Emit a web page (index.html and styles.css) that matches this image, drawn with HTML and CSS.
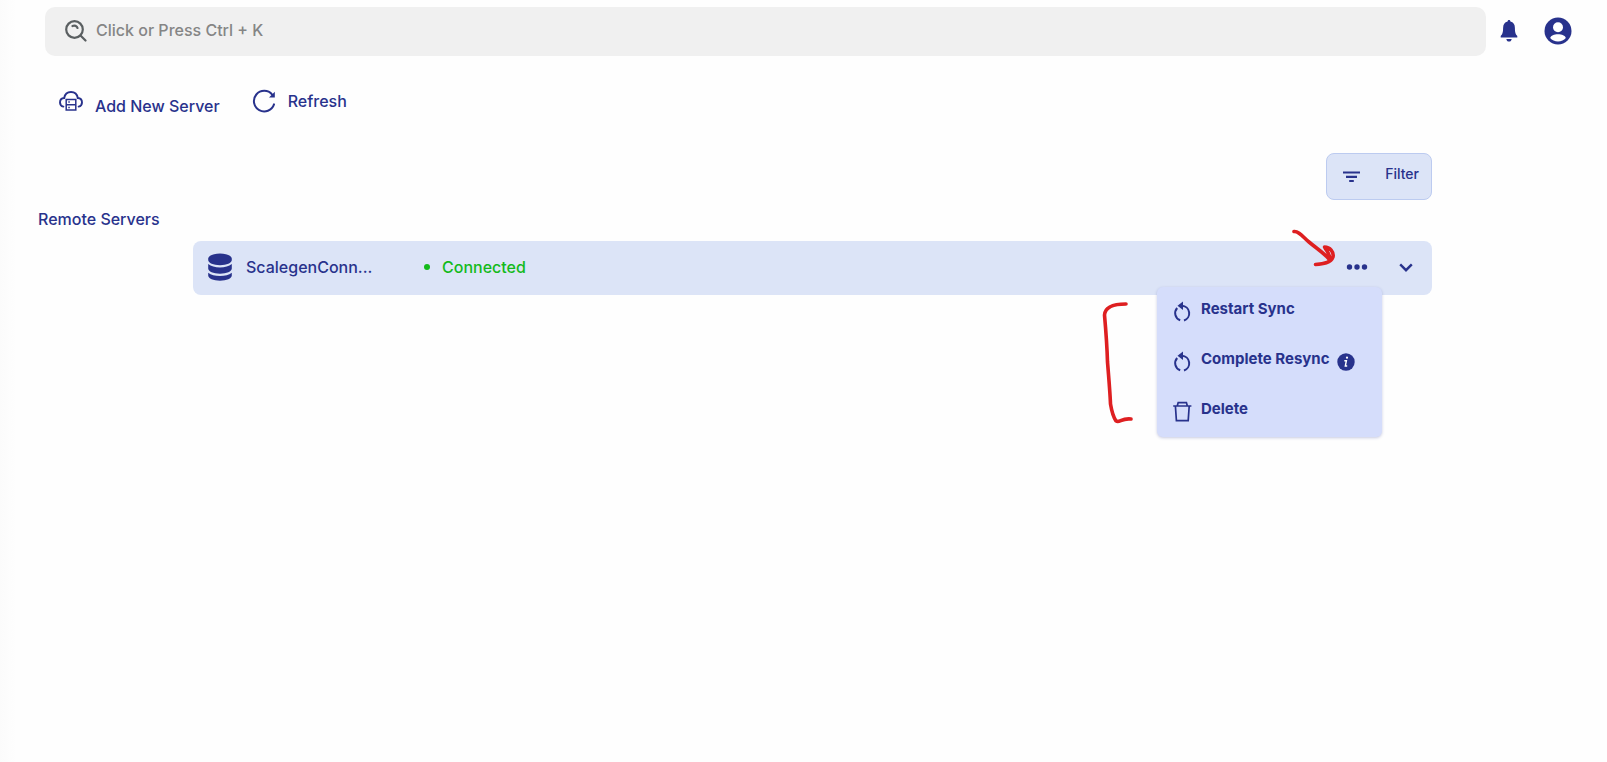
FILE: index.html
```html
<!DOCTYPE html>
<html lang="en">
<head>
    <meta charset="UTF-8">
    <meta name="viewport" content="width=device-width, initial-scale=1.0">
    <title>Remote Servers</title>
    <link rel="stylesheet" href="styles.css">
</head>
<body>
    <header class="topbar">
        <label class="search">
            <svg width="22" height="22" viewBox="0 0 22 22" fill="none" stroke="#5a5f61" stroke-width="2.2" stroke-linecap="round">
                <circle cx="9.5" cy="9.5" r="8.3"/>
                <path d="M15.5 15.5L20.5 20.5M7.5 6C9.5 5 12 6 12.5 8"/>
            </svg>
            <input type="text" aria-label="Search" placeholder="Click or Press Ctrl + K">
        </label>
        <button class="icon-btn bell" aria-label="Notifications">
            <svg width="18" height="22" viewBox="0 0 18 22" fill="#28328c">
                <path d="M9 0C9.9 0 10.4 .7 10.4 1.6C13.4 2.3 14.9 4.7 14.9 8C14.9 12.6 15.6 14.3 17.3 16V17.5H.7V16C2.4 14.3 3.1 12.6 3.1 8C3.1 4.7 4.6 2.3 7.6 1.6C7.6 .7 8.1 0 9 0Z"/>
                <path d="M6.3 19H11.7C11.5 20.7 10.4 21.6 9 21.6C7.6 21.6 6.5 20.7 6.3 19Z"/>
            </svg>
        </button>
        <button class="icon-btn" aria-label="Account">
            <svg width="28" height="28" viewBox="0 0 28 28">
                <circle cx="14" cy="14" r="13.5" fill="#28328c"/>
                <circle cx="14" cy="10.3" r="5" fill="#fff"/>
                <path d="M6.2 21C7 18.3 10 17.2 14 17.2C18 17.2 21 18.3 21.8 21C20 23.3 17.2 24.5 14 24.5C10.8 24.5 8 23.3 6.2 21Z" fill="#fff"/>
            </svg>
        </button>
    </header>

    <main>
        <div class="toolbar">
            <button class="tool add">
                <svg width="24" height="24" viewBox="0 0 24 24" fill="none" stroke="#28328c" stroke-width="1.9" stroke-linecap="round">
                    <path d="M4.4 17.6C2.2 17 1 15.4 1 13.4C1 11 2.8 9.2 5.2 9C5.8 5.4 8.5 3 12 3C15.5 3 18.2 5.4 18.8 9C21.2 9.2 23 11 23 13.4C23 15.4 21.8 17 19.6 17.6"/>
                    <path stroke-width="1.5" stroke-linecap="butt" d="M7.2 10.5H16.8V21H7.2ZM7.200 15.750H16.800M9.300 13.100H10.800M9.300 18.400H10.800"/>
                </svg>
                <span>Add New Server</span>
            </button>
            <button class="tool">
                <svg width="24" height="24" viewBox="0 0 24 24" fill="none" stroke="#28328c" stroke-width="2" stroke-linecap="round">
                    <path d="M22 15.4A10.3 10.3 0 1 1 20.2 5.6"/>
                    <path d="M22.8 2.800V8.6H17Z" fill="#28328c" stroke="none"/>
                </svg>
                <span>Refresh</span>
            </button>
        </div>

        <div class="filter-row">
            <button class="filter">
                <svg width="18" height="12" viewBox="0 0 18 12" fill="none" stroke="#28328c" stroke-width="2.2">
                    <path d="M0 1.5H17M3 5.8H14M6.2 10H10.8"/>
                </svg>
                <span>Filter</span>
            </button>
        </div>

        <h1 class="title">Remote Servers</h1>

        <div class="server">
            <svg class="db" width="24" height="28" viewBox="0 0 24 28" fill="#28328c">
                <path d="M.2 5.8C.2 2.7 5.4 .6 12 .6S23.8 2.7 23.8 5.8V7C23.8 10 18.6 12.2 12 12.2S.2 10 .2 7Z"/>
                <path d="M.2 11C3 13.3 7 14.4 12 14.4S21 13.3 23.8 11V15.6C23.8 18.6 18.6 20.8 12 20.8S.2 18.6 .2 15.6Z"/>
                <path d="M.2 19.8C3 22 7 23.1 12 23.1S21 22 23.8 19.8V22.6C23.8 25.6 18.6 27.7 12 27.7S.2 25.6 .2 22.6Z"/>
            </svg>
            <span class="name">ScalegenConn...</span>
            <span class="status">Connected</span>

            <button class="icon-btn more" aria-label="More actions">
                <svg width="24" height="8" viewBox="0 0 24 8" fill="#28328c">
                    <circle cx="4.5" cy="4" r="2.7"/><circle cx="12" cy="4" r="2.7"/><circle cx="19.5" cy="4" r="2.7"/>
                </svg>
            </button>
            <button class="icon-btn" aria-label="Expand">
                <svg width="22" height="12" viewBox="0 0 22 12" fill="none" stroke="#28328c" stroke-width="2.4">
                    <path d="M5.2 3.4L11 9.2L16.8 3.4"/>
                </svg>
            </button>

            <!-- actions menu -->
            <div class="menu">
                <button class="item">
                    <svg width="20" height="22" viewBox="0 0 20 22" fill="none" stroke="#28328c" stroke-width="2">
                        <path d="M7.200 19.300A7.6 7.6 0 0 1 4.2 7M11 19.500A7.6 7.6 0 0 0 9 4.700"/>
                        <path d="M10 .4V9L4.5 4.700Z" fill="#28328c" stroke="none"/>
                    </svg>
                    <span>Restart Sync</span>
                </button>
                <button class="item">
                    <svg width="20" height="22" viewBox="0 0 20 22" fill="none" stroke="#28328c" stroke-width="2">
                        <path d="M7.200 19.300A7.6 7.6 0 0 1 4.2 7M11 19.500A7.6 7.6 0 0 0 9 4.700"/>
                        <path d="M10 .4V9L4.5 4.700Z" fill="#28328c" stroke="none"/>
                    </svg>
                    <span>Complete Resync</span>
                    <svg class="info" width="18" height="18" viewBox="0 0 18 18">
                        <circle cx="9" cy="9" r="8.7" fill="#28328c"/>
                        <path d="M7.3 7.7H9.4L8.3 13H10.2" fill="none" stroke="#fff" stroke-width="1.4"/>
                        <circle cx="10" cy="4.7" r="1.1" fill="#fff"/>
                    </svg>
                </button>
                <button class="item">
                    <svg width="20" height="22" viewBox="0 0 20 22" fill="none" stroke="#28328c" stroke-width="1.7">
                        <path d="M.2 5H18.400M4.300 4.800L5.200 1.600H13.400L14.300 4.800M2.400 5L3.400 19.600H15.200L16.200 5"/>
                    </svg>
                    <span>Delete</span>
                </button>
            </div>

            <!-- red pen marks -->
            <svg class="pen" width="240" height="200" viewBox="1100 226 240 200" fill="none" stroke="#de1f21" stroke-width="3.6" stroke-linecap="round" stroke-linejoin="round">
                <path d="M1126 304C1113 304 1105 307 1104.5 315C1106 332 1107 345 1107.5 362C1109 380 1110 392 1110.500 404C1112 413 1114 418 1116 421C1120 423 1121 418 1131 419"/>
                <path d="M1294 231.5C1299 231 1303 237 1309 242C1316 248 1324 253 1330 260M1324.500 247C1330 247 1334 252 1333 257C1331 263 1323 264 1315.500 264.500M1325 248C1328 252 1330 255 1330 260"/>
            </svg>
        </div>
    </main>
</body>
</html>
```
FILE: styles.css
```css
*{
    margin: 0;
    padding: 0;
    box-sizing: border-box;
}
body{
    min-height: 100vh;
    background: linear-gradient(to right, #fbfbfb, #fefefe 16px);
    color: #28328c;
    font-family: Inter, "Noto Sans", sans-serif;
    font-size: 16px;
    font-weight: 500;
    line-height: 20px;
}
button{
    border: none;
    background: none;
    color: inherit;
    font: inherit;
    cursor: pointer;
}
svg{
    display: block;
    flex: none;
}
.topbar{
    display: flex;
    align-items: center;
    padding: 7px 35px 0 45px;
}
.search{
    flex: 1;
    display: flex;
    align-items: center;
    gap: 9px;
    height: 49px;
    padding: 0 20px 2px;
    border-radius: 10px;
    background-color: #f0f0f0;
}
.search input{
    flex: 1;
    height: 32px;
    padding-bottom: 2px;
    border: none;
    outline: none;
    background: none;
    font: inherit;
}
.search input::placeholder{
    color: #858585;
}
.icon-btn{
    flex: none;
    padding-bottom: 2px;
}
.bell{
    margin: 0 26px 0 14px;
}
.toolbar{
    display: flex;
    align-items: flex-start;
    gap: 32px;
    padding: 33px 59px 0;
}
.tool{
    display: flex;
    align-items: center;
    gap: 12px;
}
.add{
    height: 27px;
    align-items: flex-start;
}
.add span{
    align-self: flex-end;
}
.filter-row{
    display: flex;
    justify-content: flex-end;
    padding: 37px 175px 0 0;
}
.filter{
    display: flex;
    align-items: center;
    gap: 24px;
    height: 47px;
    padding: 0 12px 0 16px;
    border: 1px solid #bccbf0;
    border-radius: 8px;
    background-color: #dce4f7;
    font-size: 14px;
}
.filter span{
    padding-bottom: 6px;
}
.title{
    padding: 9px 38px 12px;
    font-size: 16px;
    font-weight: 500;
}
.server{
    position: relative;
    display: flex;
    align-items: center;
    height: 54px;
    margin: 0 175px 0 193px;
    padding: 0 15px 2px 15px;
    border-radius: 8px;
    background-color: #dce4f7;
}
.name{
    width: 132px;
    margin: 0 46px 0 14px;
    white-space: nowrap;
}
.status{
    flex: 1;
    display: flex;
    align-items: center;
    gap: 12px;
    color: #14ba1b;
}
.status::before{
    content: "";
    width: 6px;
    height: 6px;
    border-radius: 50%;
    background-color: #14ba1b;
}
.more{
    margin-right: 26px;
}
.server .icon-btn{
    padding-bottom: 0;
}
.menu{
    position: absolute;
    top: 46px;
    right: 50px;
    width: 225px;
    border-radius: 6px;
    background-color: #d5ddfb;
    box-shadow: 0 1px 3px rgba(40, 50, 140, .25);
}
.item{
    display: flex;
    align-items: center;
    width: 100%;
    height: 50px;
    padding: 0 16px;
    font-size: 15px;
    font-weight: 700;
}
.item span{
    padding: 0 8px 6px;
}
.pen{
    position: absolute;
    top: -15px;
    right: 92px;
    pointer-events: none;
}
```
